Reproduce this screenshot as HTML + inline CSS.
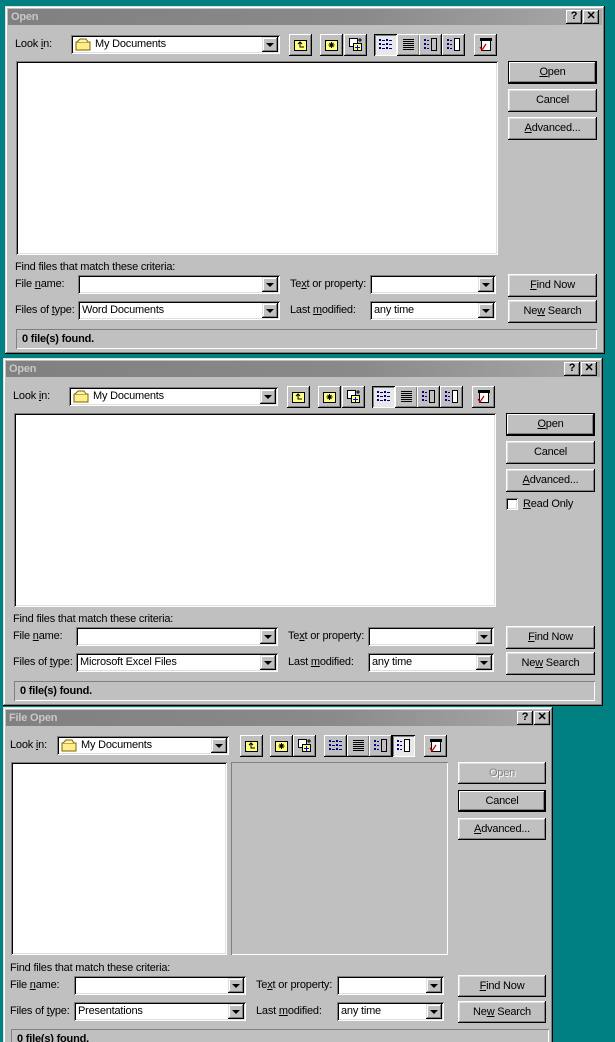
<!DOCTYPE html>
<html><head><meta charset="utf-8"><style>
*{margin:0;padding:0;box-sizing:border-box}
html{overflow:hidden;height:1042px}
body{width:615px;height:1042px;background:#008080;position:relative;overflow:hidden;font-family:"Liberation Sans",sans-serif;font-size:11px;color:#000;letter-spacing:-0.2px}
.dlg{position:absolute;background:#c0c0c0;box-shadow:inset -1px -1px #000,inset 1px 1px #dfdfdf,inset -2px -2px #808080,inset 2px 2px #fff}
.dlg div,.dlg span,.dlg svg{position:absolute}
.title{height:16px;background:linear-gradient(90deg,#808080,#8a8a8a 60%,#a8a8a8);color:#c8c8c8;font-weight:bold;font-size:11px;line-height:16px;padding-left:3px}
.tb{width:16px;height:14px;background:#c0c0c0;box-shadow:inset -1px -1px #000,inset 1px 1px #fff,inset -2px -2px #808080;font-weight:bold;font-size:11px;line-height:13px;text-align:center;color:#000}
.sunk{background:#fff;box-shadow:inset 1px 1px #808080,inset -1px -1px #fff,inset 2px 2px #000,inset -2px -2px #dfdfdf}
.grayp{box-shadow:inset 1px 1px #808080,inset -1px -1px #fff}
.btn{background:#c0c0c0;box-shadow:inset -1px -1px #000,inset 1px 1px #fff,inset -2px -2px #808080,inset 2px 2px #dfdfdf;text-align:center;line-height:22px;font-size:11px}
.def{box-shadow:inset -1px -1px #000,inset 1px 1px #000,inset -2px -2px #000,inset 2px 2px #fff,inset -3px -3px #808080}
.dis{color:#808080;text-shadow:1px 1px #fff}
.tool{width:23px;height:22px;background:#c0c0c0;box-shadow:inset -1px -1px #000,inset 1px 1px #fff,inset -2px -2px #808080}
.press{background:#e8e8e8;box-shadow:inset 1px 1px #000,inset -1px -1px #fff,inset 2px 2px #808080}
.ico{left:5px;top:4px;width:13px;height:13px}
.dd{width:16px;height:15px;top:2px;right:2px;background:#c0c0c0;box-shadow:inset -1px -1px #000,inset 1px 1px #dfdfdf,inset -2px -2px #808080,inset 2px 2px #fff}
.dd:after{content:"";position:absolute;left:4px;top:6px;border-left:4px solid transparent;border-right:4px solid transparent;border-top:4px solid #000}
.fld{height:19px;line-height:19px;padding-left:4px;white-space:nowrap}
.lbl{white-space:nowrap;line-height:13px}
u{text-decoration:underline}
.stat{box-shadow:inset 1px 1px #808080,inset -1px -1px #fff;font-weight:bold;line-height:20px;padding-left:6px}
.fol{left:4px;top:3px;width:16px;height:13px}
</style></head><body>

<!-- dialog 1 -->
<div class="dlg" style="left:5px;top:6px;width:600px;height:348px">
 <div class="title" style="left:3px;top:3px;width:594px">Open</div>
 <div class="tb" style="left:561px;top:4px">?</div><div class="tb" style="left:578px;top:4px">✕</div>
 <span class="lbl" style="left:10px;top:32px">Look <u>i</u>n:</span>
 <div class="sunk fld" style="left:66px;top:29px;width:209px;padding-left:24px">My Documents<svg class="fol" viewBox="0 0 16 13"><path d="M1 4h14v8H1z" fill="#ffef8a" stroke="#806000"/><path d="M2 4l3-3h6l2 3" fill="#fff3b0" stroke="#806000"/></svg><div class="dd"></div></div>
 <div class="tool" style="left:284px;top:28px"><svg class="ico" viewBox="0 0 13 13"><rect x=".5" y="2.5" width="12" height="10" fill="#ffff80" stroke="#000"/><path d="M4 6l2-2 2 2M6 4v5h4" fill="none" stroke="#000"/></svg></div>
 <div class="tool" style="left:315px;top:28px"><svg class="ico" viewBox="0 0 13 13"><rect x=".5" y="2.5" width="12" height="10" fill="#ffff80" stroke="#000"/><path d="M6.5 4v6M3.5 7h6M4.5 5l4 4M8.5 5l-4 4" stroke="#000"/></svg></div>
 <div class="tool" style="left:339px;top:28px"><svg class="ico" viewBox="0 0 13 13"><rect x=".5" y=".5" width="8" height="8" fill="#fff" stroke="#000"/><rect x="4.5" y="5.5" width="8" height="7" fill="#ffff80" stroke="#000"/><path d="M11 0v4M9 2h4" stroke="#000"/><path d="M8.5 7v5M6 9.5h5" stroke="#00f"/></svg></div>
 <div class="tool press" style="left:369px;top:28px"><svg class="ico" viewBox="0 0 13 13" fill="#008"><rect x="0" y="1" width="2" height="2"/><rect x="3" y="2" width="3" height="1"/><rect x="7" y="1" width="2" height="2"/><rect x="10" y="2" width="3" height="1"/><rect x="0" y="5" width="2" height="2"/><rect x="3" y="6" width="3" height="1"/><rect x="7" y="5" width="2" height="2"/><rect x="10" y="6" width="3" height="1"/><rect x="0" y="9" width="2" height="2"/><rect x="3" y="10" width="3" height="1"/><rect x="7" y="9" width="2" height="2"/><rect x="10" y="10" width="3" height="1"/></svg></div>
 <div class="tool" style="left:392px;top:28px"><svg class="ico" viewBox="0 0 13 13" fill="#000"><rect x="1" y="1" width="11" height="1"/><rect x="1" y="3" width="11" height="1"/><rect x="1" y="5" width="11" height="1"/><rect x="1" y="7" width="11" height="1"/><rect x="1" y="9" width="11" height="1"/><rect x="1" y="11" width="11" height="1"/></svg></div>
 <div class="tool" style="left:414px;top:28px"><svg class="ico" viewBox="0 0 13 13" fill="#008"><rect x="0" y="1" width="2" height="2"/><rect x="3" y="2" width="2" height="1"/><rect x="0" y="5" width="2" height="2"/><rect x="3" y="6" width="2" height="1"/><rect x="0" y="9" width="2" height="2"/><rect x="3" y="10" width="2" height="1"/><rect x="7.5" y=".5" width="5" height="12" fill="#c0c0c0" stroke="#000"/></svg></div>
 <div class="tool" style="left:437px;top:28px"><svg class="ico" viewBox="0 0 13 13" fill="#008"><rect x="0" y="1" width="2" height="2"/><rect x="3" y="2" width="2" height="1"/><rect x="0" y="5" width="2" height="2"/><rect x="3" y="6" width="2" height="1"/><rect x="0" y="9" width="2" height="2"/><rect x="3" y="10" width="2" height="1"/><rect x="7.5" y=".5" width="5" height="12" fill="#fff" stroke="#000"/></svg></div>
 <div class="tool" style="left:469px;top:28px"><svg class="ico" viewBox="0 0 13 13"><rect x="2.5" y="2.5" width="9" height="10" fill="#fff" stroke="#000"/><rect x="1" y="0" width="12" height="3" fill="#000"/><path d="M1 9l2 3 4-6" fill="none" stroke="#c00" stroke-width="1.3"/></svg></div>
 <div class="sunk" style="left:11px;top:55px;width:482px;height:194px"></div>
 <div class="btn def" style="left:503px;top:55px;width:89px;height:23px"><u>O</u>pen</div>
 <div class="btn" style="left:503px;top:83px;width:89px;height:23px">Cancel</div>
 <div class="btn" style="left:503px;top:111px;width:89px;height:23px"><u>A</u>dvanced...</div>
 <span class="lbl" style="left:10px;top:255px">Find files that match these criteria:</span>
 <span class="lbl" style="left:10px;top:272px">File <u>n</u>ame:</span>
 <div class="sunk fld" style="left:73px;top:269px;width:202px"><div class="dd"></div></div>
 <span class="lbl" style="left:285px;top:272px">Te<u>x</u>t or property:</span>
 <div class="sunk fld" style="left:365px;top:269px;width:126px"><div class="dd"></div></div>
 <div class="btn" style="left:503px;top:268px;width:89px;height:23px"><u>F</u>ind Now</div>
 <span class="lbl" style="left:10px;top:298px">Files of <u>t</u>ype:</span>
 <div class="sunk fld" style="left:73px;top:295px;width:202px">Word Documents<div class="dd"></div></div>
 <span class="lbl" style="left:285px;top:298px">Last <u>m</u>odified:</span>
 <div class="sunk fld" style="left:365px;top:295px;width:126px">any time<div class="dd"></div></div>
 <div class="btn" style="left:503px;top:294px;width:89px;height:23px">Ne<u>w</u> Search</div>
 <div class="stat" style="left:11px;top:323px;width:581px;height:20px">0 file(s) found.</div>
</div>

<!-- dialog 2 -->
<div class="dlg" style="left:3px;top:358px;width:600px;height:348px">
 <div class="title" style="left:3px;top:3px;width:594px">Open</div>
 <div class="tb" style="left:561px;top:4px">?</div><div class="tb" style="left:578px;top:4px">✕</div>
 <span class="lbl" style="left:10px;top:32px">Look <u>i</u>n:</span>
 <div class="sunk fld" style="left:66px;top:29px;width:209px;padding-left:24px">My Documents<svg class="fol" viewBox="0 0 16 13"><path d="M1 4h14v8H1z" fill="#ffef8a" stroke="#806000"/><path d="M2 4l3-3h6l2 3" fill="#fff3b0" stroke="#806000"/></svg><div class="dd"></div></div>
 <div class="tool" style="left:284px;top:28px"><svg class="ico" viewBox="0 0 13 13"><rect x=".5" y="2.5" width="12" height="10" fill="#ffff80" stroke="#000"/><path d="M4 6l2-2 2 2M6 4v5h4" fill="none" stroke="#000"/></svg></div>
 <div class="tool" style="left:315px;top:28px"><svg class="ico" viewBox="0 0 13 13"><rect x=".5" y="2.5" width="12" height="10" fill="#ffff80" stroke="#000"/><path d="M6.5 4v6M3.5 7h6M4.5 5l4 4M8.5 5l-4 4" stroke="#000"/></svg></div>
 <div class="tool" style="left:339px;top:28px"><svg class="ico" viewBox="0 0 13 13"><rect x=".5" y=".5" width="8" height="8" fill="#fff" stroke="#000"/><rect x="4.5" y="5.5" width="8" height="7" fill="#ffff80" stroke="#000"/><path d="M11 0v4M9 2h4" stroke="#000"/><path d="M8.5 7v5M6 9.5h5" stroke="#00f"/></svg></div>
 <div class="tool press" style="left:369px;top:28px"><svg class="ico" viewBox="0 0 13 13" fill="#008"><rect x="0" y="1" width="2" height="2"/><rect x="3" y="2" width="3" height="1"/><rect x="7" y="1" width="2" height="2"/><rect x="10" y="2" width="3" height="1"/><rect x="0" y="5" width="2" height="2"/><rect x="3" y="6" width="3" height="1"/><rect x="7" y="5" width="2" height="2"/><rect x="10" y="6" width="3" height="1"/><rect x="0" y="9" width="2" height="2"/><rect x="3" y="10" width="3" height="1"/><rect x="7" y="9" width="2" height="2"/><rect x="10" y="10" width="3" height="1"/></svg></div>
 <div class="tool" style="left:392px;top:28px"><svg class="ico" viewBox="0 0 13 13" fill="#000"><rect x="1" y="1" width="11" height="1"/><rect x="1" y="3" width="11" height="1"/><rect x="1" y="5" width="11" height="1"/><rect x="1" y="7" width="11" height="1"/><rect x="1" y="9" width="11" height="1"/><rect x="1" y="11" width="11" height="1"/></svg></div>
 <div class="tool" style="left:414px;top:28px"><svg class="ico" viewBox="0 0 13 13" fill="#008"><rect x="0" y="1" width="2" height="2"/><rect x="3" y="2" width="2" height="1"/><rect x="0" y="5" width="2" height="2"/><rect x="3" y="6" width="2" height="1"/><rect x="0" y="9" width="2" height="2"/><rect x="3" y="10" width="2" height="1"/><rect x="7.5" y=".5" width="5" height="12" fill="#c0c0c0" stroke="#000"/></svg></div>
 <div class="tool" style="left:437px;top:28px"><svg class="ico" viewBox="0 0 13 13" fill="#008"><rect x="0" y="1" width="2" height="2"/><rect x="3" y="2" width="2" height="1"/><rect x="0" y="5" width="2" height="2"/><rect x="3" y="6" width="2" height="1"/><rect x="0" y="9" width="2" height="2"/><rect x="3" y="10" width="2" height="1"/><rect x="7.5" y=".5" width="5" height="12" fill="#fff" stroke="#000"/></svg></div>
 <div class="tool" style="left:469px;top:28px"><svg class="ico" viewBox="0 0 13 13"><rect x="2.5" y="2.5" width="9" height="10" fill="#fff" stroke="#000"/><rect x="1" y="0" width="12" height="3" fill="#000"/><path d="M1 9l2 3 4-6" fill="none" stroke="#c00" stroke-width="1.3"/></svg></div>
 <div class="sunk" style="left:11px;top:55px;width:482px;height:194px"></div>
 <div class="btn def" style="left:503px;top:55px;width:89px;height:23px"><u>O</u>pen</div>
 <div class="btn" style="left:503px;top:83px;width:89px;height:23px">Cancel</div>
 <div class="btn" style="left:503px;top:111px;width:89px;height:23px"><u>A</u>dvanced...</div>
 <div class="sunk" style="left:503px;top:140px;width:12px;height:12px"></div>
 <span class="lbl" style="left:520px;top:140px"><u>R</u>ead Only</span>
 <span class="lbl" style="left:10px;top:255px">Find files that match these criteria:</span>
 <span class="lbl" style="left:10px;top:272px">File <u>n</u>ame:</span>
 <div class="sunk fld" style="left:73px;top:269px;width:202px"><div class="dd"></div></div>
 <span class="lbl" style="left:285px;top:272px">Te<u>x</u>t or property:</span>
 <div class="sunk fld" style="left:365px;top:269px;width:126px"><div class="dd"></div></div>
 <div class="btn" style="left:503px;top:268px;width:89px;height:23px"><u>F</u>ind Now</div>
 <span class="lbl" style="left:10px;top:298px">Files of <u>t</u>ype:</span>
 <div class="sunk fld" style="left:73px;top:295px;width:202px">Microsoft Excel Files<div class="dd"></div></div>
 <span class="lbl" style="left:285px;top:298px">Last <u>m</u>odified:</span>
 <div class="sunk fld" style="left:365px;top:295px;width:126px">any time<div class="dd"></div></div>
 <div class="btn" style="left:503px;top:294px;width:89px;height:23px">Ne<u>w</u> Search</div>
 <div class="stat" style="left:11px;top:323px;width:581px;height:20px">0 file(s) found.</div>
</div>

<!-- dialog 3 -->
<div class="dlg" style="left:3px;top:707px;width:550px;height:360px">
 <div class="title" style="left:3px;top:3px;width:545px">File Open</div>
 <div class="tb" style="left:514px;top:4px">?</div><div class="tb" style="left:531px;top:4px">✕</div>
 <span class="lbl" style="left:7px;top:32px">Look <u>i</u>n:</span>
 <div class="sunk fld" style="left:54px;top:29px;width:172px;padding-left:24px">My Documents<svg class="fol" viewBox="0 0 16 13"><path d="M1 4h14v8H1z" fill="#ffef8a" stroke="#806000"/><path d="M2 4l3-3h6l2 3" fill="#fff3b0" stroke="#806000"/></svg><div class="dd"></div></div>
 <div class="tool" style="left:237px;top:28px"><svg class="ico" viewBox="0 0 13 13"><rect x=".5" y="2.5" width="12" height="10" fill="#ffff80" stroke="#000"/><path d="M4 6l2-2 2 2M6 4v5h4" fill="none" stroke="#000"/></svg></div>
 <div class="tool" style="left:267px;top:28px"><svg class="ico" viewBox="0 0 13 13"><rect x=".5" y="2.5" width="12" height="10" fill="#ffff80" stroke="#000"/><path d="M6.5 4v6M3.5 7h6M4.5 5l4 4M8.5 5l-4 4" stroke="#000"/></svg></div>
 <div class="tool" style="left:290px;top:28px"><svg class="ico" viewBox="0 0 13 13"><rect x=".5" y=".5" width="8" height="8" fill="#fff" stroke="#000"/><rect x="4.5" y="5.5" width="8" height="7" fill="#ffff80" stroke="#000"/><path d="M11 0v4M9 2h4" stroke="#000"/><path d="M8.5 7v5M6 9.5h5" stroke="#00f"/></svg></div>
 <div class="tool" style="left:321px;top:28px"><svg class="ico" viewBox="0 0 13 13" fill="#008"><rect x="0" y="1" width="2" height="2"/><rect x="3" y="2" width="3" height="1"/><rect x="7" y="1" width="2" height="2"/><rect x="10" y="2" width="3" height="1"/><rect x="0" y="5" width="2" height="2"/><rect x="3" y="6" width="3" height="1"/><rect x="7" y="5" width="2" height="2"/><rect x="10" y="6" width="3" height="1"/><rect x="0" y="9" width="2" height="2"/><rect x="3" y="10" width="3" height="1"/><rect x="7" y="9" width="2" height="2"/><rect x="10" y="10" width="3" height="1"/></svg></div>
 <div class="tool" style="left:344px;top:28px"><svg class="ico" viewBox="0 0 13 13" fill="#000"><rect x="1" y="1" width="11" height="1"/><rect x="1" y="3" width="11" height="1"/><rect x="1" y="5" width="11" height="1"/><rect x="1" y="7" width="11" height="1"/><rect x="1" y="9" width="11" height="1"/><rect x="1" y="11" width="11" height="1"/></svg></div>
 <div class="tool" style="left:366px;top:28px"><svg class="ico" viewBox="0 0 13 13" fill="#008"><rect x="0" y="1" width="2" height="2"/><rect x="3" y="2" width="2" height="1"/><rect x="0" y="5" width="2" height="2"/><rect x="3" y="6" width="2" height="1"/><rect x="0" y="9" width="2" height="2"/><rect x="3" y="10" width="2" height="1"/><rect x="7.5" y=".5" width="5" height="12" fill="#c0c0c0" stroke="#000"/></svg></div>
 <div class="tool press" style="left:389px;top:28px"><svg class="ico" viewBox="0 0 13 13" fill="#008"><rect x="0" y="1" width="2" height="2"/><rect x="3" y="2" width="2" height="1"/><rect x="0" y="5" width="2" height="2"/><rect x="3" y="6" width="2" height="1"/><rect x="0" y="9" width="2" height="2"/><rect x="3" y="10" width="2" height="1"/><rect x="7.5" y=".5" width="5" height="12" fill="#fff" stroke="#000"/></svg></div>
 <div class="tool" style="left:421px;top:28px"><svg class="ico" viewBox="0 0 13 13"><rect x="2.5" y="2.5" width="9" height="10" fill="#fff" stroke="#000"/><rect x="1" y="0" width="12" height="3" fill="#000"/><path d="M1 9l2 3 4-6" fill="none" stroke="#c00" stroke-width="1.3"/></svg></div>
 <div class="sunk" style="left:8px;top:55px;width:216px;height:193px"></div>
 <div class="grayp" style="left:228px;top:55px;width:217px;height:193px"></div>
 <div class="btn dis" style="left:455px;top:55px;width:88px;height:22px">Open</div>
 <div class="btn def" style="left:455px;top:83px;width:88px;height:22px">Cancel</div>
 <div class="btn" style="left:455px;top:111px;width:88px;height:22px"><u>A</u>dvanced...</div>
 <span class="lbl" style="left:7px;top:255px">Find files that match these criteria:</span>
 <span class="lbl" style="left:7px;top:272px">File <u>n</u>ame:</span>
 <div class="sunk fld" style="left:71px;top:269px;width:172px"><div class="dd"></div></div>
 <span class="lbl" style="left:253px;top:272px">Te<u>x</u>t or property:</span>
 <div class="sunk fld" style="left:334px;top:269px;width:107px"><div class="dd"></div></div>
 <div class="btn" style="left:455px;top:268px;width:88px;height:22px"><u>F</u>ind Now</div>
 <span class="lbl" style="left:7px;top:298px">Files of <u>t</u>ype:</span>
 <div class="sunk fld" style="left:71px;top:295px;width:172px">Presentations<div class="dd"></div></div>
 <span class="lbl" style="left:253px;top:298px">Last <u>m</u>odified:</span>
 <div class="sunk fld" style="left:334px;top:295px;width:107px">any time<div class="dd"></div></div>
 <div class="btn" style="left:455px;top:294px;width:88px;height:22px">Ne<u>w</u> Search</div>
 <div class="stat" style="left:8px;top:322px;width:538px;height:20px">0 file(s) found.</div>
</div>
</body></html>
